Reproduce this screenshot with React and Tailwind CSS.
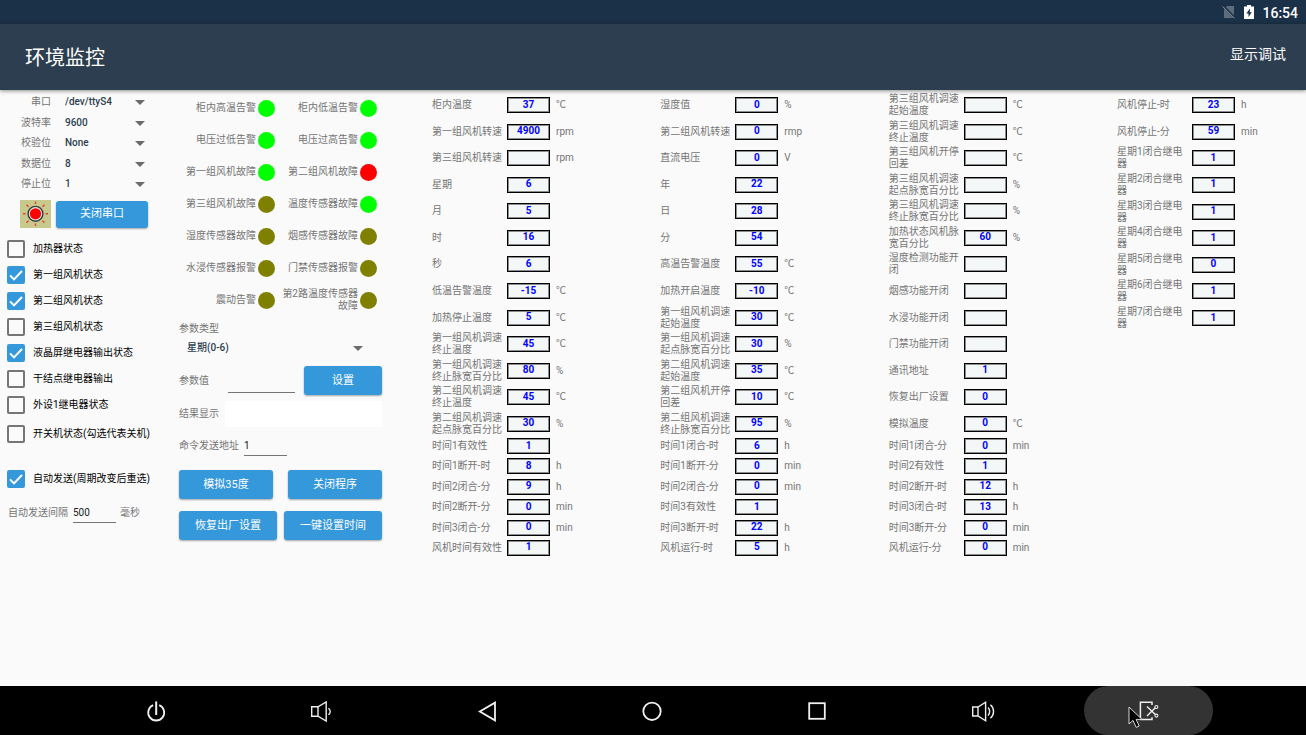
import React, { useState } from 'react';

const SERIAL_OPTIONS = [
  { id: 'port', label: '串口', options: ['/dev/ttyS4', '/dev/ttyS3'] },
  { id: 'baud', label: '波特率', options: ['9600', '19200', '115200'] },
  { id: 'parity', label: '校验位', options: ['None', 'Odd', 'Even'] },
  { id: 'data-bits', label: '数据位', options: ['8', '7'] },
  { id: 'stop-bits', label: '停止位', options: ['1', '2'] },
];

const SWITCHES = [
  { id: 'heater', label: '加热器状态', on: false },
  { id: 'fan-1', label: '第一组风机状态', on: true },
  { id: 'fan-2', label: '第二组风机状态', on: true },
  { id: 'fan-3', label: '第三组风机状态', on: false },
  { id: 'lcd-relay', label: '液晶屏继电器输出状态', on: true },
  { id: 'dry-relay', label: '干结点继电器输出', on: false },
  { id: 'ext-1', label: '外设1继电器状态', on: false },
];

const LAMP_COLORS = {
  ok: 'bg-[#00ff00]',
  fault: 'bg-[#ff0000]',
  off: 'bg-[#808000]',
};

const ALARMS = [
  ['柜内高温告警', 'ok'],
  ['柜内低温告警', 'ok'],
  ['电压过低告警', 'ok'],
  ['电压过高告警', 'ok'],
  ['第一组风机故障', 'ok'],
  ['第二组风机故障', 'fault'],
  ['第三组风机故障', 'off'],
  ['温度传感器故障', 'ok'],
  ['湿度传感器故障', 'off'],
  ['烟感传感器故障', 'off'],
  ['水浸传感器报警', 'off'],
  ['门禁传感器报警', 'off'],
  ['震动告警', 'off'],
  ['第2路温度传感器故障', 'off'],
];

// [label, value, unit]
const READINGS = [
  {
    id: 'a',
    main: [
      ['柜内温度', '37', '℃'],
      ['第一组风机转速', '4900', 'rpm'],
      ['第三组风机转速', '', 'rpm'],
      ['星期', '6', ''],
      ['月', '5', ''],
      ['时', '16', ''],
      ['秒', '6', ''],
      ['低温告警温度', '-15', '℃'],
      ['加热停止温度', '5', '℃'],
      ['第一组风机调速终止温度', '45', '℃'],
      ['第一组风机调速终止脉宽百分比', '80', '%'],
      ['第二组风机调速终止温度', '45', '℃'],
      ['第二组风机调速起点脉宽百分比', '30', '%'],
    ],
    timer: [
      ['时间1有效性', '1', ''],
      ['时间1断开-时', '8', 'h'],
      ['时间2闭合-分', '9', 'h'],
      ['时间2断开-分', '0', 'min'],
      ['时间3闭合-分', '0', 'min'],
      ['风机时间有效性', '1', ''],
    ],
  },
  {
    id: 'b',
    main: [
      ['湿度值', '0', '%'],
      ['第二组风机转速', '0', 'rmp'],
      ['直流电压', '0', 'V'],
      ['年', '22', ''],
      ['日', '28', ''],
      ['分', '54', ''],
      ['高温告警温度', '55', '℃'],
      ['加热开启温度', '-10', '℃'],
      ['第一组风机调速起始温度', '30', '℃'],
      ['第一组风机调速起点脉宽百分比', '30', '%'],
      ['第二组风机调速起始温度', '35', '℃'],
      ['第二组风机开停回差', '10', '℃'],
      ['第二组风机调速终止脉宽百分比', '95', '%'],
    ],
    timer: [
      ['时间1闭合-时', '6', 'h'],
      ['时间1断开-分', '0', 'min'],
      ['时间2闭合-分', '0', 'min'],
      ['时间3有效性', '1', ''],
      ['时间3断开-时', '22', 'h'],
      ['风机运行-时', '5', 'h'],
    ],
  },
  {
    id: 'c',
    main: [
      ['第三组风机调速起始温度', '', '℃'],
      ['第三组风机调速终止温度', '', '℃'],
      ['第三组风机开停回差', '', '℃'],
      ['第三组风机调速起点脉宽百分比', '', '%'],
      ['第三组风机调速终止脉宽百分比', '', '%'],
      ['加热状态风机脉宽百分比', '60', '%'],
      ['湿度检测功能开闭', '', ''],
      ['烟感功能开闭', '', ''],
      ['水浸功能开闭', '', ''],
      ['门禁功能开闭', '', ''],
      ['通讯地址', '1', ''],
      ['恢复出厂设置', '0', ''],
      ['模拟温度', '0', '℃'],
    ],
    timer: [
      ['时间1闭合-分', '0', 'min'],
      ['时间2有效性', '1', ''],
      ['时间2断开-时', '12', 'h'],
      ['时间3闭合-时', '13', 'h'],
      ['时间3断开-分', '0', 'min'],
      ['风机运行-分', '0', 'min'],
    ],
  },
  {
    id: 'd',
    main: [
      ['风机停止-时', '23', 'h'],
      ['风机停止-分', '59', 'min'],
      ['星期1闭合继电器', '1', ''],
      ['星期2闭合继电器', '1', ''],
      ['星期3闭合继电器', '1', ''],
      ['星期4闭合继电器', '1', ''],
      ['星期5闭合继电器', '0', ''],
      ['星期6闭合继电器', '1', ''],
      ['星期7闭合继电器', '1', ''],
    ],
    timer: [],
  },
];

const NAV_ITEMS = [
  {
    name: '电源',
    icon: (
      <>
        <path d="M9.2 6.1a8 8 0 1 0 6 0" strokeWidth="1.8" />
        <path d="M12.2 2.4V16" strokeWidth="2" />
      </>
    ),
  },
  {
    name: '音量减',
    icon: (
      <>
        <path d="M2.7 7.8H9L17.2 3V22L9 17.2H2.7ZM9 7.8V17.2" />
        <path d="M19.4 9.2c2.4 1.8 2.4 4.8 0 6.6" />
      </>
    ),
  },
  { name: '返回', icon: <path d="M20 3.6V21.4L4.8 12.5Z" strokeWidth="1.8" /> },
  { name: '主页', icon: <circle cx="12" cy="12.3" r="8.7" strokeWidth="1.8" /> },
  { name: '最近任务', icon: <rect x="4.2" y="4.2" width="15.6" height="15.6" strokeWidth="1.8" /> },
  {
    name: '音量加',
    icon: (
      <>
        <path d="M1.7 8H7L14.6 3.2V21.8L7 17H1.7ZM7 8V17" />
        <path d="M17 8.6c2.2 2.2 2.2 5.6 0 7.8M19.4 5.8c4.2 3.6 4.2 9.8 0 13.4" />
      </>
    ),
  },
  {
    name: '截屏',
    active: true,
    icon: (
      <>
        <path d="M16 6V3.3H4.4V20.6H16V18.2" strokeWidth="1.5" />
        <path d="M11 7.6L19.3 15.6M11 17L19.3 8.8" />
        <circle cx="20.4" cy="8" r="1.5" strokeWidth="1.1" />
        <circle cx="20.4" cy="16.6" r="1.5" strokeWidth="1.1" />
      </>
    ),
  },
];

const Dropdown = ({ id, options, className }) => (
  <div className={`relative ${className}`}>
    <select id={id} className="w-full appearance-none bg-transparent text-[10px] leading-4 font-medium text-[#2c3e50] outline-none">
      {options.map((option) => (
        <option key={option}>{option}</option>
      ))}
    </select>
    <svg viewBox="0 0 10 5" className="pointer-events-none absolute right-0 top-1.5 h-[5px] w-[10px] fill-[#6b6b6b]">
      <path d="M0 0h10L5 5z" />
    </svg>
  </div>
);

const Checkbox = ({ id, label, defaultOn }) => {
  const [checked, setChecked] = useState(defaultOn);

  return (
    <div className="flex items-center gap-2">
      <div className="relative h-[18px] w-[18px]">
        <input
          id={id}
          type="checkbox"
          checked={checked}
          onChange={(e) => setChecked(e.target.checked)}
          className="block h-full w-full appearance-none rounded-xs border-2 border-[#757575] checked:border-[#3498db] checked:bg-[#3498db]"
        />
        {checked && (
          <svg viewBox="0 0 18 18" className="pointer-events-none absolute inset-0 fill-none stroke-white" strokeWidth="2">
            <path d="M3 9.4l4 4 8-8.4" />
          </svg>
        )}
      </div>
      <label htmlFor={id} className="whitespace-nowrap text-black">{label}</label>
    </div>
  );
};

const ActionButton = ({ children, className }) => (
  <button
    type="button"
    className={`rounded-[3px] bg-[#3498db] text-[11px] text-white shadow-[0_1px_2px_rgba(0,0,0,0.35)] ${className}`}
  >
    {children}
  </button>
);

const Reading = ({ id, label, value, unit, className }) => (
  <div className={`flex items-center ${className}`}>
    <label htmlFor={id} className="w-[75px] shrink-0 pr-1">{label}</label>
    <input
      id={id}
      readOnly
      value={value}
      className="h-4 w-[43px] shrink-0 border border-black bg-[#f4f7f7] pb-0.5 text-center text-[10px] leading-3 font-bold text-[#0000ff] shadow-[inset_0_0_0_1px_#8c8c8c] outline-none"
    />
    <span className="pl-1.5">{unit}</span>
  </div>
);

const ReadingColumn = ({ id, main, timer }) => (
  <div>
    <div className={`flex flex-col justify-between ${timer.length ? 'h-[343px]' : 'h-[237px]'}`}>
      {main.map(([label, value, unit], index) => (
        <Reading key={label} id={`${id}-main-${index}`} label={label} value={value} unit={unit} className="h-6" />
      ))}
    </div>
    {timer.length > 0 && (
      <div className="mt-px flex h-[120px] flex-col justify-between">
        {timer.map(([label, value, unit], index) => (
          <Reading key={label} id={`${id}-timer-${index}`} label={label} value={value} unit={unit} className="h-[18px]" />
        ))}
      </div>
    )}
  </div>
);

const SunIcon = () => (
  <svg viewBox="0 0 31 28" className="h-7 w-[31px] bg-[#c8c98d]">
    <g stroke="#e8402c" strokeWidth="1.4">
      <path d="M15.5 1.5v2.5M15.5 23.5V26M3 13.8h2.5M25.5 13.8H28M6.5 4.8l2 2M24.5 4.8l-2 2M6.5 22.8l2-2M24.5 22.8l-2-2" />
    </g>
    <circle cx="15.5" cy="13.8" r="7.4" fill="#e9e9e9" stroke="#3b3b3b" strokeWidth="1.4" />
    <circle cx="15.5" cy="13.8" r="5.6" fill="#ff0000" />
  </svg>
);

const StatusBar = () => (
  <div className="flex h-6 items-center justify-end bg-[#1b3147] pr-2 text-white">
    <svg viewBox="0 0 14 14" className="mr-2 h-3.5 w-3.5">
      <path d="M5 1h7v12H2V4z" fill="#5d6d7d" />
      <path d="M1 .8l12.4 12.6" stroke="#1b3147" strokeWidth="2.4" />
      <path d="M.6 1.4l12 12" stroke="#8794a0" strokeWidth="1" />
    </svg>
    <svg viewBox="0 0 10 14" className="mr-2 h-3.5 w-2.5">
      <path d="M3 0h4v1.5h3V14H0V1.5h3z" fill="#ffffff" />
      <path d="M6 3.5L2.3 8.4h2.2V12L7.8 7.2H5.8z" fill="#1b3147" />
    </svg>
    <span className="pt-0.5 text-[14px] leading-5 font-medium">16:54</span>
  </div>
);

const Pointer = () => (
  <svg viewBox="0 0 15 23" className="pointer-events-none absolute left-11 top-5 h-[23px] w-[15px]">
    <path d="M1 1v17l4-3.6 3.2 7 3-1.4-3.1-6.6H14z" fill="#000000" stroke="#d8d8d8" strokeWidth="1" />
  </svg>
);

const App = () => (
  <div className="flex min-h-screen flex-col bg-[#fafafa] font-[Roboto,'Noto_Sans_CJK_SC',sans-serif] text-[10px] leading-3 text-[#757575]">
    <StatusBar />
    <header className="relative flex h-[66px] items-center justify-between bg-[#2c3e50] pl-[25px] pr-5 text-white shadow-[0_1px_4px_rgba(0,0,0,0.45)]">
      <h1 className="pt-0.5 text-[20px] leading-7">环境监控</h1>
      <button type="button" className="pb-1.5 text-[14px] leading-5">显示调试</button>
    </header>

    <main className="flex flex-1 items-start pt-0.5">
      {/* Serial port */}
      <section className="w-[179px] shrink-0 pl-[7px]">
        <div className="flex h-[102px] flex-col justify-between">
          {SERIAL_OPTIONS.map(({ id, label, options }) => (
            <div key={id} className="flex h-5 items-center">
              <label htmlFor={id} className="w-11 text-right">{label}</label>
              <Dropdown id={id} options={options} className="ml-3.5 w-20" />
            </div>
          ))}
        </div>
        <div className="mt-1.5 flex items-center gap-[5px] pl-[13px]">
          <SunIcon />
          <ActionButton className="h-[27px] w-[92px]">关闭串口</ActionButton>
        </div>

        <div className="mt-3 flex flex-col gap-2">
          {SWITCHES.map(({ id, label, on }) => (
            <Checkbox key={id} id={id} label={label} defaultOn={on} />
          ))}
        </div>
        <div className="mt-[11px]">
          <Checkbox id="power-state" label="开关机状态(勾选代表关机)" defaultOn={false} />
        </div>
        <div className="mt-[27px]">
          <Checkbox id="auto-send" label="自动发送(周期改变后重选)" defaultOn />
        </div>
        <div className="mt-[15px] flex items-center pl-px">
          <label htmlFor="interval" className="w-[65px]">自动发送间隔</label>
          <input
            id="interval"
            defaultValue="500"
            className="h-5 w-[43px] border-b border-[#757575] text-[10px] text-[#212121] outline-none"
          />
          <span className="ml-1">毫秒</span>
        </div>
      </section>

      {/* Alarms and parameters */}
      <section className="w-[203px] shrink-0">
        <div className="grid grid-cols-[96px_97px] gap-x-[5px]">
          {ALARMS.map(([label, state]) => (
            <div key={label} className="flex h-8 items-center justify-end gap-0.5">
              <span className="max-w-[78px] text-right">{label}</span>
              <span className={`h-[17px] w-[17px] shrink-0 rounded-full ${LAMP_COLORS[state]}`} />
            </div>
          ))}
        </div>

        <label htmlFor="param-type" className="mt-[7px] block">参数类型</label>
        <Dropdown id="param-type" options={['星期(0-6)', '年', '月', '日']} className="ml-2 mt-[5px] w-[176px]" />

        <div className="mt-2.5 flex items-center">
          <label htmlFor="param-value" className="w-[49px]">参数值</label>
          <input id="param-value" className="h-6 w-[67px] border-b border-[#757575] text-[10px] text-[#212121] outline-none" />
          <ActionButton className="ml-auto h-[29px] w-[78px]">设置</ActionButton>
        </div>
        <div className="mt-1.5 flex items-center">
          <span className="w-[46px]">结果显示</span>
          <output className="h-[26px] flex-1 bg-white" />
        </div>
        <div className="mt-[9px] flex items-center">
          <label htmlFor="address" className="w-[65px]">命令发送地址</label>
          <input
            id="address"
            defaultValue="1"
            className="h-5 w-[43px] border-b border-[#757575] text-[10px] text-[#212121] outline-none"
          />
        </div>

        <div className="mt-3.5 flex justify-between">
          <ActionButton className="h-[29px] w-[94px]">模拟35度</ActionButton>
          <ActionButton className="h-[29px] w-[94px]">关闭程序</ActionButton>
        </div>
        <div className="mt-3 flex justify-between">
          <ActionButton className="h-[29px] w-[98px]">恢复出厂设置</ActionButton>
          <ActionButton className="h-[29px] w-[98px]">一键设置时间</ActionButton>
        </div>
      </section>

      {/* Readings */}
      <section className="grid flex-1 grid-cols-[1fr_1fr_1fr_189px] pl-[50px] pt-px">
        {READINGS.map((column) => (
          <ReadingColumn key={column.id} {...column} />
        ))}
      </section>
    </main>

    <nav className="flex h-[49px] justify-around bg-black pl-[73px] pr-[75px]">
      {NAV_ITEMS.map(({ name, icon, active }) => (
        <button
          key={name}
          type="button"
          aria-label={name}
          className={`relative flex w-[129px] items-center justify-center rounded-full ${active ? 'bg-[#333333]' : ''}`}
        >
          <svg viewBox="0 0 24 24" className="h-6 w-6 fill-none stroke-[#f0f0f0]" strokeWidth="1.4">
            {icon}
          </svg>
          {active && <Pointer />}
        </button>
      ))}
    </nav>
  </div>
);

export default App;
